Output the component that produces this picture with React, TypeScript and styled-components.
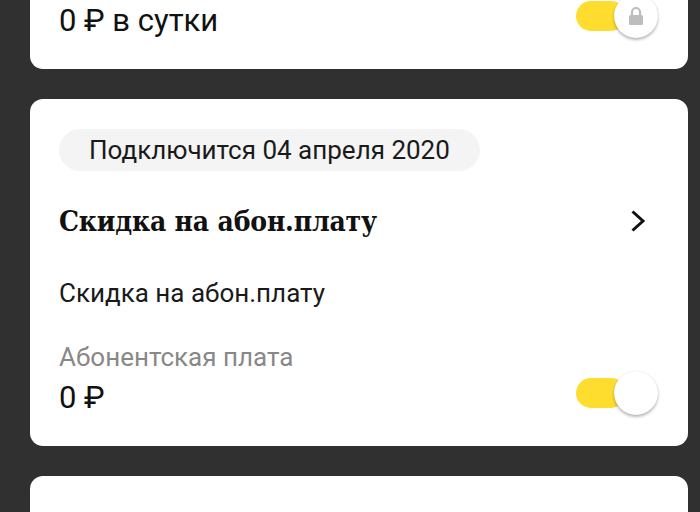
import React from 'react';
import styled, { createGlobalStyle } from 'styled-components';

const GlobalStyle = createGlobalStyle`
  html, body {
    margin: 0;
    padding: 0;
    background: #303030;
    overflow: hidden;
  }
  body {
    font-family: Roboto, "Noto Sans", sans-serif;
    color: #111;
  }
`;

const Page = styled.div`
  width: 700px;
  height: 512px;
  overflow: hidden;
  box-sizing: border-box;
  padding: 0 12px 0 30px;
  display: flex;
  flex-direction: column;
  gap: 30px;
`;

const Card = styled.div<{ $shift?: number; $top?: number }>`
  background: #fff;
  border-radius: 13px;
  padding: ${(p) => p.$top ?? 30}px 30px 29px 29px;
  margin-top: ${(p) => (p.$shift ? `-${p.$shift}px` : '0')};
  display: flex;
  flex-direction: column;
  flex-shrink: 0;
`;

const Pill = styled.div`
  align-self: flex-start;
  background: #f4f4f4;
  border-radius: 21px;
  height: 42px;
  padding: 0 30px;
  display: flex;
  align-items: center;
  font-size: 26px;
  color: #1a1a1a;
`;

const TitleRow = styled.div`
  display: flex;
  align-items: center;
  justify-content: space-between;
  margin-top: 28px;
  height: 44px;
  padding-right: 12px;
`;

const Title = styled.h2`
  margin: 0;
  font-family: "DejaVu Serif Condensed", "DejaVu Serif", serif;
  font-weight: bold;
  font-size: 28px;
  letter-spacing: -0.2px;
  color: #111;
`;

const Subtitle = styled.div`
  margin-top: 34px;
  font-size: 26px;
  line-height: 32px;
  color: #1a1a1a;
`;

const Label = styled.div`
  margin-top: 32px;
  font-size: 26px;
  line-height: 32px;
  color: #888;
`;

const PriceRow = styled.div<{ $gap?: number }>`
  display: flex;
  align-items: center;
  justify-content: space-between;
  height: 40px;
  margin-top: ${(p) => p.$gap ?? 0}px;
`;

const Price = styled.div`
  font-size: 31px;
  color: #111;
`;

const Switch = styled.div`
  position: relative;
  width: 82px;
  height: 44px;
  margin-top: -8px;
`;

const Track = styled.div`
  position: absolute;
  left: 0;
  top: 7px;
  width: 50px;
  height: 30px;
  border-radius: 15px;
  background: #fedd2f;
`;

const Knob = styled.div`
  position: absolute;
  right: 0;
  top: 0;
  width: 44px;
  height: 44px;
  border-radius: 50%;
  background: #fff;
  box-shadow: 0 2px 3px rgba(0, 0, 0, 0.28), 0 0 1px rgba(0, 0, 0, 0.15);
  display: flex;
  align-items: center;
  justify-content: center;
`;

const Lock = () => (
  <svg width="16" height="20" viewBox="0 0 16 20">
    <path d="M4 9V6a4 4 0 0 1 8 0v3" fill="none" stroke="#bdbdbd" strokeWidth="2.2" />
    <rect x="1" y="9" width="14" height="10" rx="1.5" fill="#bdbdbd" />
  </svg>
);

const Chevron = () => (
  <svg width="16" height="24" viewBox="0 0 16 24">
    <path d="M2.5 2.5 13 12 2.5 21.5" fill="none" stroke="#111" strokeWidth="3" />
  </svg>
);

const Toggle: React.FC<{ locked?: boolean }> = ({ locked }) => (
  <Switch>
    <Track />
    <Knob>{locked && <Lock />}</Knob>
  </Switch>
);

export default function App() {
  return (
    <>
      <GlobalStyle />
      <Page>
        <Card $shift={30}>
          <PriceRow>
            <Price>0 ₽ в сутки</Price>
            <Toggle locked />
          </PriceRow>
        </Card>

        <Card>
          <Pill>Подключится 04 апреля 2020</Pill>
          <TitleRow>
            <Title>Скидка на абон.плату</Title>
            <Chevron />
          </TitleRow>
          <Subtitle>Скидка на абон.плату</Subtitle>
          <Label>Абонентская плата</Label>
          <PriceRow $gap={4}>
            <Price>0 ₽</Price>
            <Toggle />
          </PriceRow>
        </Card>

        <Card $top={44}>
          <Title>Облачный сервис</Title>
        </Card>
      </Page>
    </>
  );
}
